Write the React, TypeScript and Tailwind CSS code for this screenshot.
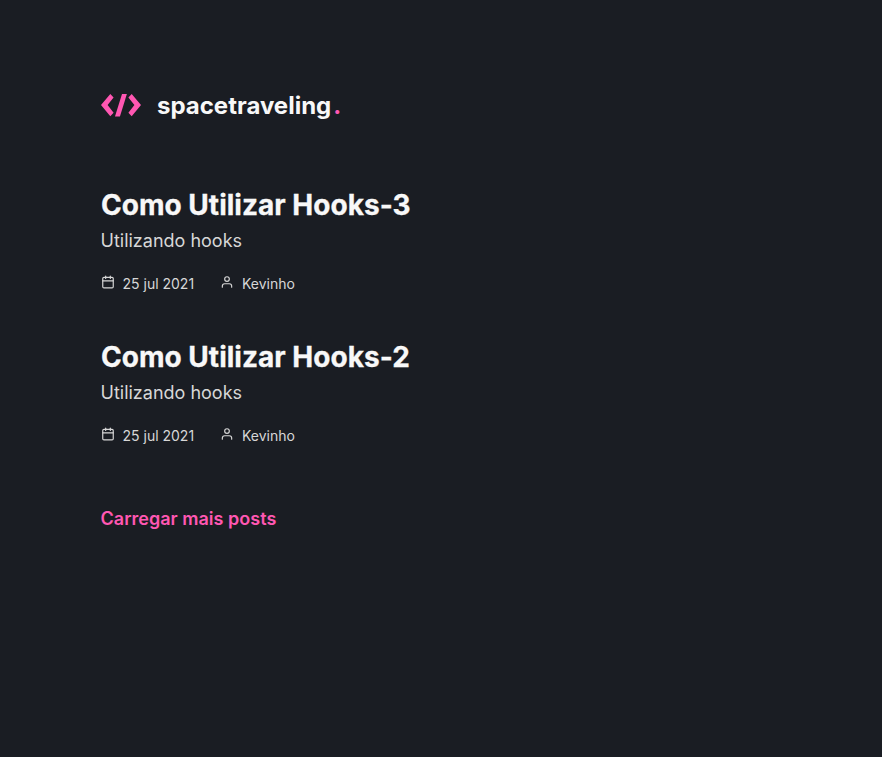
import { FiCalendar, FiUser } from 'react-icons/fi';

const posts = [
  { title: 'Como Utilizar Hooks-3', subtitle: 'Utilizando hooks', date: '25 jul 2021', author: 'Kevinho' },
  { title: 'Como Utilizar Hooks-2', subtitle: 'Utilizando hooks', date: '25 jul 2021', author: 'Kevinho' },
];

function Logo() {
  return (
    <div className="flex h-[26px] items-center">
      <svg width="40" height="24" viewBox="0 0 40 24" fill="#ff57b2" className="shrink-0">
        <path d="M9.3 1 0 12l9.3 11.2 3.3-3.5L6.6 12l6-7.6z" />
        <path d="M21 1h4.9l-7 22.5H14z" />
        <path d="M30.7 1 40 12l-9.3 11.2-3.3-3.5 6-7.7-6-7.6z" />
      </svg>
      <span className="ml-4 whitespace-nowrap pt-[2px] text-[24px] font-bold leading-[26px] text-[#f8f8f8]">
        spacetraveling<span className="ml-[2px] text-[#ff57b2]">.</span>
      </span>
    </div>
  );
}

export default function App() {
  return (
    <div className="min-h-screen bg-[#1a1d23] pl-[101px] pt-[92px] font-['Inter',sans-serif]">
      <header>
        <Logo />
      </header>
      <main className="pt-[68px]">
        {posts.map((post) => (
          <article key={post.title} className="h-[152px]">
            <h2 className="text-[28px] font-bold leading-[38px] tracking-[0.02px] text-[#f8f8f8] [-webkit-text-stroke:0.3px_#f8f8f8]">
              {post.title}
            </h2>
            <p className="-ml-[0.5px] mt-[3px] text-[18px] leading-[28px] text-[#d7d7d7]">{post.subtitle}</p>
            <div className="mt-[19px] flex h-[20px] text-[14px] leading-[20px] text-[#d7d7d7]">
              <FiCalendar size={14} className="mt-px" />
              <time className="ml-[7.5px] w-[72.5px] whitespace-nowrap">{post.date}</time>
              <FiUser size={14} className="ml-[25px] mt-px" />
              <span className="ml-[8px]">{post.author}</span>
            </div>
          </article>
        ))}
        <button className="-ml-[0.5px] mt-[15px] block text-[18px] font-semibold leading-[28px] tracking-[0.02px] text-[#ff57b2]">
          Carregar mais posts
        </button>
      </main>
    </div>
  );
}
